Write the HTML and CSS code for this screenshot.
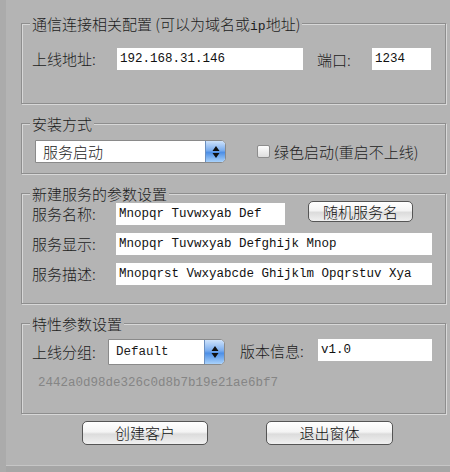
FILE: index.html
```html
<!DOCTYPE html>
<html lang="zh-CN">
<head>
    <meta charset="UTF-8">
    <meta name="viewport" content="width=device-width, initial-scale=1.0">
    <title>配置</title>
    <link rel="stylesheet" href="styles.css">
</head>
<body>
    <div class="window">
        <div class="group group-conn">
            <div class="group-title">通信连接相关配置 (可以为域名或<span class="mono-inline">ip</span>地址)</div>
            <div class="row">
                <label class="label">上线地址:</label>
                <input class="field w-host" type="text" value="192.168.31.146">
                <label class="label-port">端口:</label>
                <input class="field w-port" type="text" value="1234">
            </div>
        </div>

        <div class="group group-install">
            <div class="group-title">安装方式</div>
            <div class="row row-select">
                <div class="select w-mode">
                    <span class="select-text cjk">服务启动</span>
                    <span class="stepper">
                        <svg width="8" height="14" viewBox="0 0 8 14"><path d="M4 1 L7.5 6 L0.5 6 Z M4 13 L7.5 8 L0.5 8 Z" fill="#111"/></svg>
                    </span>
                </div>
                <label class="check">
                    <span class="box"></span>
                    <span>绿色启动(重启不上线)</span>
                </label>
            </div>
        </div>

        <div class="group group-service">
            <div class="group-title">新建服务的参数设置</div>
            <div class="row">
                <label class="label">服务名称:</label>
                <input class="field w-name" type="text" value="Mnopqr Tuvwxyab Def">
                <button class="btn btn-random">随机服务名</button>
            </div>
            <div class="row">
                <label class="label">服务显示:</label>
                <input class="field w-long" type="text" value="Mnopqr Tuvwxyab Defghijk Mnop">
            </div>
            <div class="row">
                <label class="label">服务描述:</label>
                <input class="field w-long" type="text" value="Mnopqrst Vwxyabcde Ghijklm Opqrstuv Xya">
            </div>
        </div>

        <div class="group group-extra">
            <div class="group-title">特性参数设置</div>
            <div class="row row-top">
                <label class="label label-group">上线分组:</label>
                <div class="select w-group">
                    <span class="select-text mono">Default</span>
                    <span class="stepper">
                        <svg width="8" height="14" viewBox="0 0 8 14"><path d="M4 1 L7.5 6 L0.5 6 Z M4 13 L7.5 8 L0.5 8 Z" fill="#111"/></svg>
                    </span>
                </div>
                <label class="label-version">版本信息:</label>
                <input class="field w-version" type="text" value="v1.0">
            </div>
            <div class="hash">2442a0d98de326c0d8b7b19e21ae6bf7</div>
        </div>

        <div class="actions">
            <button class="btn btn-main btn-create">创建客户</button>
            <button class="btn btn-main btn-exit">退出窗体</button>
        </div>
    </div>
</body>
</html>
```

FILE: styles.css
```css
body {
    margin: 0;
    padding: 0;
    background-color: #b4b4b4;
    font-family: "Noto Sans CJK SC", "Noto Sans", sans-serif;
    font-size: 15px;
    font-weight: 300;
    color: #1c1c1c;
}
.window {
    width: 450px;
    height: 472px;
    box-sizing: border-box;
    padding: 23px 0 0 15px;
    border-left: 6px solid #ababab;
    background: linear-gradient(to bottom, #b4b4b4 465px, #c6c6c6 465px, #c6c6c6 466px, #a6a6a6 466px);
}
.group {
    width: 425px;
    box-sizing: border-box;
    margin: 0 0 19px 0;
    padding: 0 10px;
    border: 1px solid #8e8e8e;
    box-shadow: inset 1px 1px 0 #d8d8d8, 1px 1px 0 #d8d8d8;
}
.group-title {
    width: fit-content;
    margin: -9px 0 0 -2px;
    padding: 0 2px;
    line-height: 18px;
    height: 18px;
    background: #b4b4b4;
    white-space: nowrap;
}
.mono-inline {
    font-family: "Liberation Mono", monospace;
    font-size: 13px;
    line-height: 1;
}
.group-conn {
    padding-bottom: 33px;
}
.group-conn .row {
    margin-top: 15px;
}
.group-install {
    padding-bottom: 10px;
}
.group-install .row {
    margin-top: 7px;
}
.group-service {
    padding-bottom: 18px;
}
.group-service .row:first-of-type {
    margin-top: 5px;
}
.group-service .row + .row {
    margin-top: 8px;
}
.group-extra {
    padding-bottom: 22px;
    margin-bottom: 7px;
}
.group-extra .row {
    margin-top: 6px;
}
.row {
    display: flex;
    align-items: center;
    height: 22px;
}
.row-select {
    height: 23px;
}
.row-top {
    height: 26px;
    align-items: flex-start;
}
.label {
    width: 84px;
    flex: none;
    line-height: 22px;
}
.label-group {
    width: 76px;
    line-height: 26px;
}
.label-port {
    margin-left: 14px;
    width: 55px;
}
.label-version {
    margin-left: 15px;
    width: 78px;
    line-height: 24px;
}
.field {
    height: 22px;
    box-sizing: border-box;
    border: none;
    padding: 0 3px;
    background: #fff;
    font-family: "Liberation Mono", "DejaVu Sans Mono", monospace;
    font-size: 12.5px;
    color: #111;
    outline: none;
}
.w-host { width: 186px; margin-left: 1px; }
.w-port { width: 59px; }
.w-name { width: 169px; }
.w-long { width: 316px; }
.w-version { width: 114px; }
.mono {
    font-family: "Liberation Mono", "DejaVu Sans Mono", monospace;
    font-size: 12.5px;
    font-weight: 400;
}
.select {
    display: flex;
    align-items: center;
    box-sizing: border-box;
    background: #fff;
    border: 1px solid #8a8a8a;
    border-radius: 0 5px 5px 0;
    overflow: hidden;
}
.w-mode {
    width: 191px;
    height: 23px;
    margin-left: 3px;
}
.w-group {
    width: 117px;
    height: 26px;
}
.select-text {
    flex: 1;
    padding-left: 7px;
}
.select-text.cjk {
    font-size: 15px;
}
.stepper {
    width: 19px;
    height: 100%;
    display: flex;
    align-items: center;
    justify-content: center;
    background: linear-gradient(#cfe3fb, #79acee 45%, #4d8fe6 55%, #a9d2fb);
    border-left: 1px solid #6b8fbf;
}
.check {
    display: flex;
    align-items: center;
    margin-left: 31px;
    font-size: 15px;
}
.box {
    width: 11px;
    height: 11px;
    margin-right: 4px;
    border: 1px solid #8d8d8d;
    border-radius: 2px;
    background: linear-gradient(#fdfdfd, #dedede);
}
.btn {
    font-family: "Noto Sans CJK SC", "Noto Sans", sans-serif;
    font-size: 15px;
    font-weight: 300;
    color: #111;
    border: 1px solid #555;
    border-radius: 5px;
    background: linear-gradient(#ffffff, #f4f4f4 45%, #dcdcdc 55%, #f0f0f0);
    padding: 0;
    cursor: pointer;
}
.btn-random {
    width: 105px;
    height: 21px;
    margin-left: 23px;
    margin-top: -6px;
    line-height: 19px;
}
.hash {
    margin: 10px 0 0 6px;
    line-height: 16px;
    font-family: "Liberation Mono", "DejaVu Sans Mono", monospace;
    font-size: 12.5px;
    font-weight: 400;
    color: #858585;
}
.actions {
    display: flex;
    height: 24px;
}
.btn-main {
    height: 24px;
    line-height: 22px;
}
.btn-create {
    width: 126px;
    margin-left: 61px;
}
.btn-exit {
    width: 127px;
    margin-left: 58px;
}
```
